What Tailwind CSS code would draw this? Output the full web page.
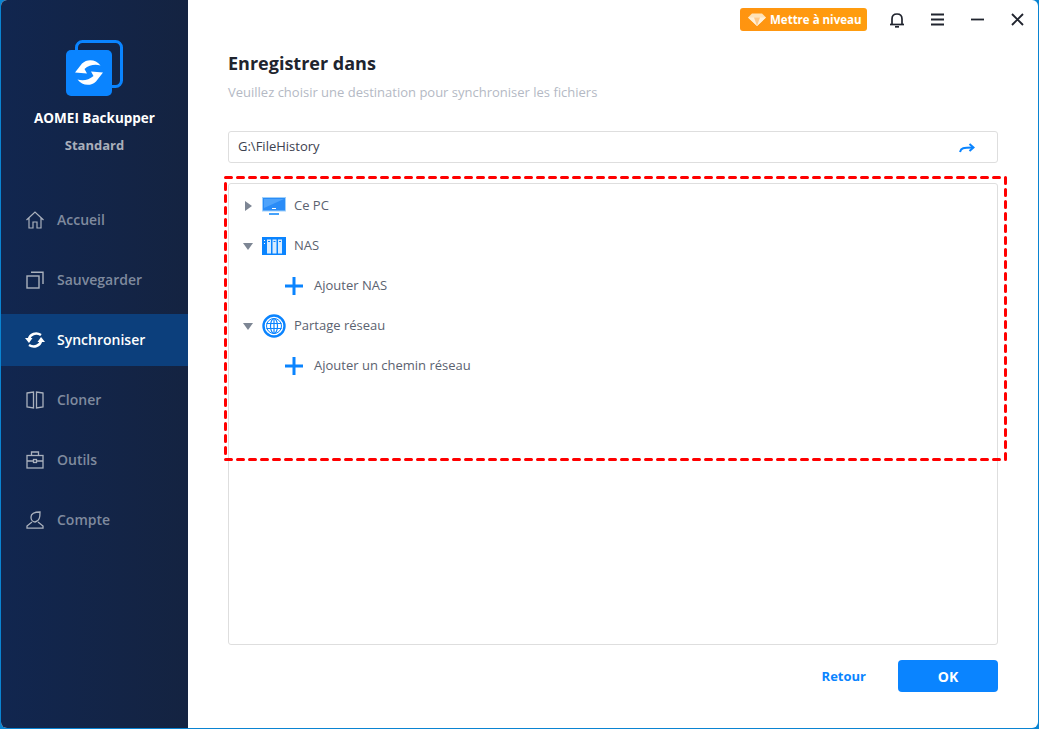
<!DOCTYPE html>
<html lang="fr">
<head>
    <meta charset="UTF-8">
    <title>AOMEI Backupper</title>
    <script src="https://cdn.jsdelivr.net/npm/@tailwindcss/browser@4"></script>
</head>
<body class="bg-white">
    <div class="relative w-[1039px] h-[729px] overflow-hidden bg-[#0a84d2] pl-px pr-px pb-px font-['Open_Sans',sans-serif]">
        <div class="flex h-full rounded-b-[6px] rounded-t-[6px] overflow-hidden bg-white">

            <!-- Sidebar -->
            <aside class="w-[187px] shrink-0 flex flex-col bg-gradient-to-r from-[#11264f] to-[#142341]">
                <div class="h-[194px] pt-[40px] flex flex-col items-center">
                    <svg class="w-[57px] h-[57px] ml-[-1px]" viewBox="0 0 57 57">
                        <rect x="10.5" y="1.5" width="45" height="45" rx="6" fill="none" stroke="#0a84ff" stroke-width="3"/>
                        <rect x="0" y="10" width="46" height="46" rx="5" fill="#0a84ff"/>
                        <path d="M34.5 25.5 C30 19 21 18.5 16 23.5 L9 32.5 L21 33.5 L18.5 29 C23 25 29 24 34.5 25.5 Z" fill="#fff"/>
                        <path d="M34.5 25.5 C30 19 21 18.5 16 23.5 L9 32.5 L21 33.5 L18.5 29 C23 25 29 24 34.5 25.5 Z" fill="#fff" transform="rotate(180 23 32.5)"/>
                    </svg>
                    <div class="mt-[12px] text-[13.5px] leading-[19px] font-bold text-white">AOMEI Backupper</div>
                    <div class="mt-[7px] text-[13px] leading-[20px] font-bold text-[#a9afba]">Standard</div>
                </div>

                <nav class="flex flex-col gap-[8px] text-[14px] leading-[18px] font-semibold text-[#7f8a9e]">
                    <a class="h-[52px] flex items-center pl-[25px] gap-[13px]">
                        <svg class="w-[18px] h-[18px]" viewBox="0 0 18 18" fill="none" stroke="#aab1bd" stroke-width="1.2"><path d="M0.5 9 L9 1 L17.5 9 M3 7 V17 H7 V11 H11 V17 H15 V7"/></svg>
                        <span>Accueil</span>
                    </a>
                    <a class="h-[52px] flex items-center pl-[25px] gap-[13px]">
                        <svg class="w-[18px] h-[18px]" viewBox="0 0 18 18" fill="none" stroke="#aab1bd" stroke-width="1.4"><rect x="1" y="5" width="12" height="12"/><path d="M5 1.2 H17 V13"/></svg>
                        <span>Sauvegarder</span>
                    </a>
                    <a class="h-[52px] flex items-center pl-[25px] gap-[13px] bg-[#0c3f7c] text-white">
                        <svg class="w-[20px] h-[18px] ml-[-1px] mr-[-1px]" viewBox="0 0 20 18" fill="none" stroke="#fff" stroke-width="2.6"><path d="M4 8 C5 3 11 1 16 4"/><path d="M16 10 C15 15 9 17 4 14"/><path d="M0 7 L7.5 7 L4 12 Z" fill="#fff" stroke="none"/><path d="M12.5 11 L20 11 L16 6 Z" fill="#fff" stroke="none"/></svg>
                        <span>Synchroniser</span>
                    </a>
                    <a class="h-[52px] flex items-center pl-[25px] gap-[13px]">
                        <svg class="w-[18px] h-[18px]" viewBox="0 0 18 18" fill="none" stroke="#aab1bd" stroke-width="1.3"><path d="M1 2 L7.5 1 V17 L1 16 Z"/><path d="M17 2 L10.5 1 V17 L17 16 Z"/></svg>
                        <span>Cloner</span>
                    </a>
                    <a class="h-[52px] flex items-center pl-[25px] gap-[13px]">
                        <svg class="w-[18px] h-[18px]" viewBox="0 0 18 18" fill="none" stroke="#aab1bd" stroke-width="1.3"><rect x="1" y="4.5" width="16" height="12.5"/><path d="M5.5 4.5 V1 H12.5 V4.5 M1 10 H7.5 M10.5 10 H17"/><rect x="7.5" y="8.5" width="3" height="3"/></svg>
                        <span>Outils</span>
                    </a>
                    <a class="h-[52px] flex items-center pl-[25px] gap-[13px]">
                        <svg class="w-[18px] h-[18px]" viewBox="0 0 18 18" fill="none" stroke="#aab1bd" stroke-width="1.3"><path d="M5 6 C5 3 8 1 14 1 C14 5 14 10 9 11 C6 11 5 8 5 6 Z"/><path d="M6 11 L1 15 V17.2 H17 V15 L12 11"/></svg>
                        <span>Compte</span>
                    </a>
                </nav>
            </aside>

            <!-- Main -->
            <main class="flex-1 flex flex-col min-w-0 pl-[40px] pr-[40px]">
                <div class="h-[39px] -mr-[40px] flex items-center justify-end">
                    <div class="flex items-center h-[23px] w-[127px] rounded-[3px] bg-gradient-to-r from-[#ff9410] to-[#ff9d0e] pl-[8px] gap-[4px] text-[11.5px] font-bold text-white mr-[22px]">
                        <svg class="w-[18px] h-[13px]" viewBox="0 0 18 13"><path d="M4 0.5 H14 L18 4.5 L9 13 L0 4.5 Z" fill="#ffe3b8"/><path d="M0 4.5 H18 L9 13 Z" fill="#fff0d8"/><path d="M6 4.5 L9 13 L12 4.5 Z" fill="#ffc988"/></svg>
                        <span>Mettre à niveau</span>
                    </div>
                    <svg class="w-[16px] h-[16px] mr-[26px]" viewBox="0 0 16 16" fill="none" stroke="#20242e" stroke-width="1.7"><path d="M3 12 V7 C3 4 5 2 8 2 C11 2 13 4 13 7 V12"/><path d="M1 12.5 H15"/><path d="M6 14.8 H10"/></svg>
                    <svg class="w-[13px] h-[13px] mr-[27px]" viewBox="0 0 13 13" stroke="#20242e" stroke-width="1.8"><path d="M0 1.5 H13 M0 6.5 H13 M0 11.5 H13"/></svg>
                    <svg class="w-[13px] h-[13px] mr-[27px]" viewBox="0 0 13 13" stroke="#20242e" stroke-width="1.8"><path d="M0 6.5 H13"/></svg>
                    <svg class="w-[13px] h-[13px] mr-[14px]" viewBox="0 0 13 13" stroke="#20242e" stroke-width="1.9"><path d="M1 1 L12 12 M12 1 L1 12"/></svg>
                </div>

                <h1 class="mt-[11px] text-[18px] leading-[26px] font-bold text-[#20242e]">Enregistrer dans</h1>
                <p class="mt-[7px] text-[13px] leading-[18px] text-[#b4b9c4]">Veuillez choisir une destination pour synchroniser les fichiers</p>

                <div class="mt-[30px] h-[32px] shrink-0 flex items-center justify-between rounded-[3px] border border-[#dedede] pl-[9px] pr-[22px] text-[13px] text-[#3c4250]">
                    <span>G:\FileHistory</span>
                    <svg class="w-[16px] h-[10px] mt-[1px]" viewBox="0 0 16 10" fill="none" stroke="#0a84ff" stroke-width="2"><path d="M1 9 C2 5 4 4.5 14 4.5"/><path d="M10.5 1 L14.5 4.5 L10.5 8"/></svg>
                </div>

                <div class="mt-[20px] h-[462px] shrink-0 rounded-[3px] border border-[#dedede] pt-[2px] text-[13px] text-[#5b6270]">
                    <div class="h-[40px] flex items-center pl-[16px]">
                        <span class="w-0 h-0 border-y-[5px] border-y-transparent border-l-[7px] border-l-[#7d8694] mr-[10px]"></span>
                        <svg class="w-[24px] h-[18px]" viewBox="0 0 24 18"><rect x="0.5" y="0.5" width="23" height="13.5" fill="#2a8cf7" stroke="#9fd0fb"/><path d="M2 2 H22 L2 11 Z" fill="#4ea3fb"/><rect x="10" y="11" width="4" height="1" fill="#fff"/><rect x="7" y="16" width="10" height="2" fill="#45a2fb"/></svg>
                        <span class="ml-[8px]">Ce PC</span>
                    </div>
                    <div class="h-[40px] flex items-center pl-[14px]">
                        <span class="w-0 h-0 border-x-[5px] border-x-transparent border-t-[7px] border-t-[#7d8694] mr-[9px]"></span>
                        <svg class="w-[24px] h-[18px]" viewBox="0 0 24 18"><rect width="24" height="18" fill="#0a84ff"/><rect x="5" y="2.5" width="4" height="14" fill="#d8ecff"/><rect x="10.5" y="2.5" width="4" height="14" fill="#d8ecff"/><rect x="16" y="2.5" width="4" height="14" fill="#d8ecff"/><rect x="2" y="3" width="1" height="1" fill="#fff"/><rect x="2" y="6" width="1" height="1" fill="#fff"/><rect x="6" y="4" width="2" height="1" fill="#0a84ff"/><rect x="11.5" y="4" width="2" height="1" fill="#0a84ff"/><rect x="17" y="4" width="2" height="1" fill="#0a84ff"/></svg>
                        <span class="ml-[8px]">NAS</span>
                    </div>
                    <div class="h-[40px] flex items-center pl-[56px]">
                        <svg class="w-[18px] h-[18px]" viewBox="0 0 18 18" stroke="#0a84ff" stroke-width="3"><path d="M0 9 H18 M9 0 V18"/></svg>
                        <span class="ml-[11px]">Ajouter NAS</span>
                    </div>
                    <div class="h-[40px] flex items-center pl-[14px]">
                        <span class="w-0 h-0 border-x-[5px] border-x-transparent border-t-[7px] border-t-[#7d8694] mr-[9px]"></span>
                        <svg class="w-[24px] h-[24px]" viewBox="0 0 24 24" fill="none" stroke="#0a84ff"><circle cx="12" cy="12" r="10.5" stroke-width="2.4"/><circle cx="12" cy="12" r="7.5" stroke-width="1"/><ellipse cx="12" cy="12" rx="3.5" ry="7.5" stroke-width="1.2"/><path d="M4.5 9.5 H19.5 M4.5 14.5 H19.5 M12 4.5 V19.5" stroke-width="1.2"/></svg>
                        <span class="ml-[8px]">Partage réseau</span>
                    </div>
                    <div class="h-[40px] flex items-center pl-[56px]">
                        <svg class="w-[18px] h-[18px]" viewBox="0 0 18 18" stroke="#0a84ff" stroke-width="3"><path d="M0 9 H18 M9 0 V18"/></svg>
                        <span class="ml-[11px]">Ajouter un chemin réseau</span>
                    </div>
                </div>

                <div class="mt-[15px] flex items-center justify-end gap-[32px]">
                    <span class="mt-[2px] text-[13px] font-bold text-[#0a84ff]">Retour</span>
                    <button class="w-[100px] h-[32px] rounded-[4px] bg-[#0a84ff] text-[14px] font-bold text-white">OK</button>
                </div>
            </main>
        </div>

        <!-- Red dashed highlight drawn over the tree -->
        <svg class="absolute left-[224px] top-[176px] w-[784px] h-[286px]" viewBox="0 0 784 286" fill="none">
            <rect x="1.5" y="1.5" width="780" height="282" stroke="#ff0000" stroke-width="3" stroke-dasharray="6 6" stroke-linecap="round"/>
        </svg>
    </div>
</body>
</html>
